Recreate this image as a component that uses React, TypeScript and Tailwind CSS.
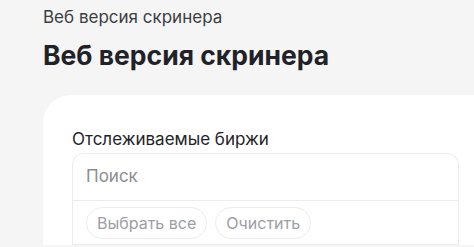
export default function App() {
  return (
    <div className="min-h-screen bg-[#f5f5f6] pl-[43px] pt-[5px] font-['Inter','Noto_Sans',sans-serif] overflow-hidden">
      <div className="text-[17px] leading-6 text-[#3a3d42]">Веб версия скринера</div>
      <h1 className="mt-[10px] text-[26.5px] leading-8 font-bold text-[#1f2328]">Веб версия скринера</h1>

      <div className="mt-[24px] w-[460px] rounded-tl-[28px] bg-white pl-[29px] pt-[32px]">
        <div className="text-[17px] leading-6 text-[#222428]">Отслеживаемые биржи</div>
        <div className="mt-[2px] w-[387px] rounded-t-xl border border-[#ececee] border-b-0">
          <div className="flex h-[47px] items-center border-b border-[#ececee] px-[13px] text-[17px] text-[#8a8d93]">
            Поиск
          </div>
          <div className="flex gap-[8px] border-b border-[#ececee] px-[13px] pt-[6px] pb-[5px]">
            <button className="rounded-full border border-[#ececee] px-[10px] py-[4px] text-[16px] leading-[22px] text-[#9b9ea4]">
              Выбрать все
            </button>
            <button className="rounded-full border border-[#ececee] px-[10px] py-[4px] text-[16px] leading-[22px] text-[#9b9ea4]">
              Очистить
            </button>
          </div>
        </div>
      </div>
    </div>
  )
}
